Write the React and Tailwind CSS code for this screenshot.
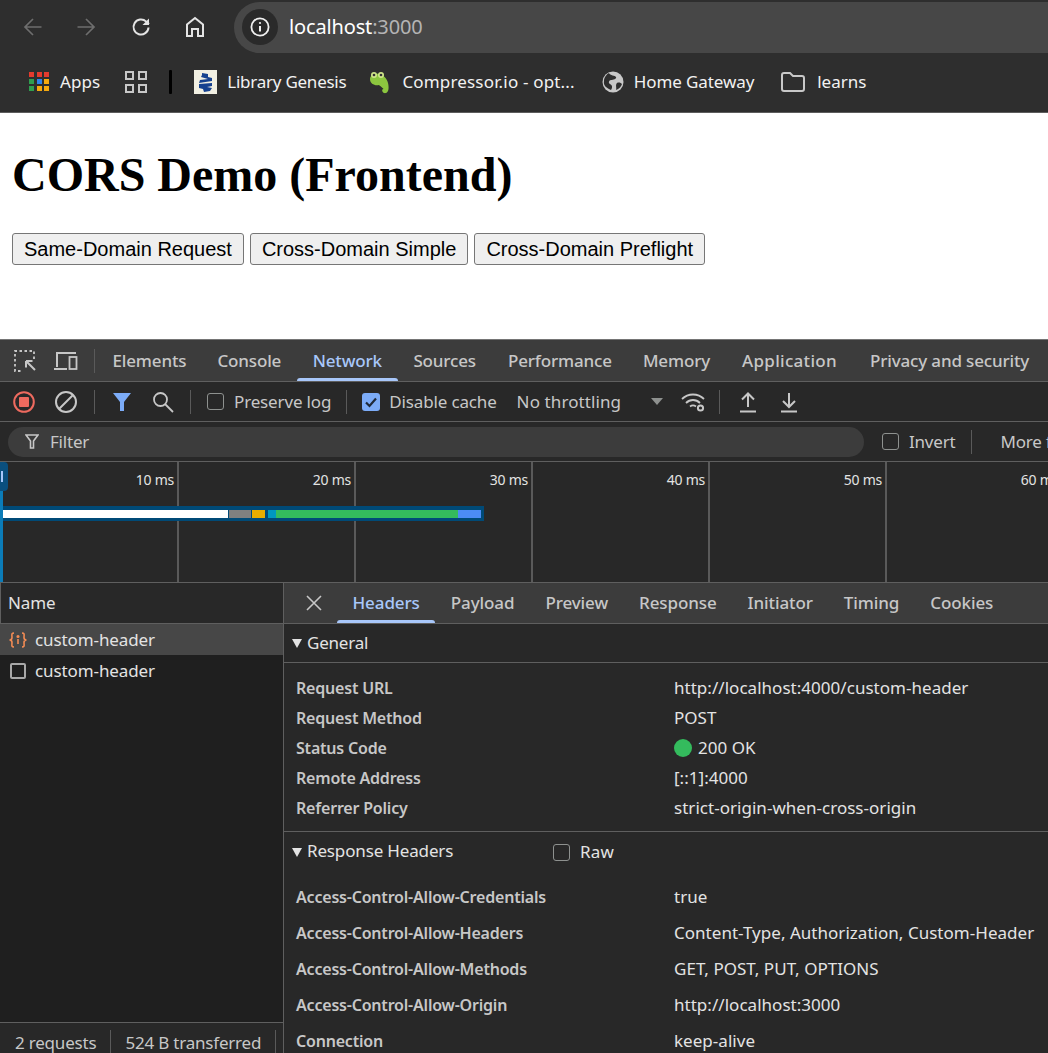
import React from "react";

const UI = { fontFamily: '"Noto Sans", "Open Sans", sans-serif' };

function Back({ flip }) {
  return (
    <svg width="20" height="20" viewBox="0 0 20 20" fill="none" stroke="#6e6e6e" strokeWidth="1.7" style={flip ? { transform: "scaleX(-1)" } : undefined}>
      <path d="M18.5 10H2M10 2l-8 8 8 8" />
    </svg>
  );
}
function Bookmark({ icon, label, cls, textCls }) {
  return (
    <div className={"flex items-center gap-[10px] " + (cls || "")}>
      {icon}
      <span className={textCls || ""}>{label}</span>
    </div>
  );
}
function AppsIcon() {
  const c = ["#e33b2e", "#e33b2e", "#e33b2e", "#2f9e4f", "#2c83ee", "#f5a90f", "#2f9e4f", "#f5a90f", "#f5a90f"];
  return (
    <div className="grid grid-cols-3 gap-[2px] w-[21px]">
      {c.map((x, i) => <div key={i} className="w-[5px] h-[5px]" style={{ background: x }} />)}
    </div>
  );
}
function Sep({ h = "h-[24px]", cls = "" }) {
  return <div className={"w-[1px] bg-[#5a5a5a] shrink-0 " + h + " " + cls} />;
}
function Tab({ children, active, cls = "" }) {
  return (
    <div className={"h-full flex items-center relative shrink-0 px-[15.5px] " + cls + (active ? " text-[#a8c7fa]" : " text-[#c7c7c7]")}>
      {children}
      {active && <div className="absolute left-0 right-0 bottom-0 h-[3px] rounded-t-[3px] bg-[#a8c7fa]" />}
    </div>
  );
}
function Row({ k, children, h = "h-[30px]" }) {
  return (
    <div className={"flex items-center " + h}>
      <div className="w-[390px] shrink-0 font-semibold text-[#c7c7c7] text-[16px] pl-[12px] tracking-[-0.2px] whitespace-nowrap">{k}</div>
      <div className="text-[#e3e3e3] text-[17px] whitespace-nowrap tracking-[0.03px]">{children}</div>
    </div>
  );
}
function Check({ cls = "" }) {
  return <div className={"w-[17px] h-[17px] rounded-[3px] border-[1.5px] border-[#8e918f] shrink-0 " + cls} />;
}

export default function App() {
  return (
    <div style={UI} className="w-[1048px] h-[1053px] overflow-hidden bg-white flex flex-col text-[18px]">
      {/* Chrome */}
      <div className="bg-[#2e2e2e] text-white shrink-0">
        <div className="h-[53px] flex items-center pt-[1px]">
          <div className="w-[234px] flex items-center shrink-0 pl-[23px]">
            <Back />
            <div className="w-[33px]" />
            <Back flip />
            <div className="w-[35px]" />
            <svg width="20" height="20" viewBox="0 0 20 20" fill="none" stroke="#e4e4e4" strokeWidth="2">
              <path d="M17.500 10.500a7.500 7.500 0 1 1-2.300-5.900L18 7" />
              <path d="M18 1.500V8h-6.500" fill="#e4e4e4" stroke="none" />
            </svg>
            <div className="w-[34px]" />
            <svg width="20" height="22" viewBox="0 0 20 22" fill="none" stroke="#e4e4e4" strokeWidth="2">
              <path d="M2 20V8.500L10 2l8 6.500V20h-5v-7H7v7z" />
            </svg>
          </div>
          <div className="flex-1 h-[51px] bg-[#474747] rounded-l-[26px] flex items-center pl-[8px]">
            <div className="w-[36px] h-[36px] rounded-full bg-[#2a2a2a] flex items-center justify-center">
              <svg width="20" height="20" viewBox="0 0 20 20" fill="none" stroke="#f0f0f0" strokeWidth="1.800">
                <circle cx="10" cy="10" r="8.600" />
                <path d="M10 9v5.500" strokeWidth="2" />
                <circle cx="10" cy="6" r="1.100" fill="#f0f0f0" stroke="none" />
              </svg>
            </div>
            <div className="ml-[11px] text-[20px] tracking-[-0.15px]">localhost<span className="text-[#b4b4b4]">:3000</span></div>
          </div>
        </div>
        <div className="h-[59px] flex items-center pl-[29px] pb-[2px] text-[#f2f2f2] text-[17px] tracking-[-0.15px] whitespace-nowrap">
          <Bookmark icon={<AppsIcon />} label="Apps" textCls="tracking-[0.1px]" />
          <div className="grid grid-cols-2 gap-[4px] ml-[25px] shrink-0">
            {[0, 1, 2, 3].map((i) => <div key={i} className="w-[9px] h-[9px] border-[2px] border-[#c8c8c8]" />)}
          </div>
          <div className="w-[3px] h-[24px] bg-black ml-[22px] mr-[22px] rounded-[1px]" />
          <Bookmark
            label="Library Genesis"
            textCls="tracking-[-0.25px]"
            icon={
              <svg width="23" height="24" viewBox="0 0 23 24">
                <rect width="23" height="24" fill="#f1efe2" />
                <path d="M8 3l6 1v3l4 1v3l-13 2 1-3 8-1-7-2 1-2zM5 14l13-1 0 3-5 1 5 1-2 3-6 1-1-3-4-1z" fill="#16418f" />
              </svg>
            }
          />
          <Bookmark
            cls="ml-[23px]"
            label="Compressor.io - opt..."
            textCls="tracking-[0.17px]"
            icon={
              <svg width="23" height="24" viewBox="0 0 23 24">
                <path d="M1 9c0-4 5-6 9-5 4 1 8 4 9 9 1 4 1 9-2 10-3 1-5-3-3-4 1 0 2 1 1 2 0-3-3-4-5-6-4 1-9-1-9-6z" fill="#8cc63f" />
                <circle cx="5" cy="5" r="3" fill="#cfe58a" />
                <circle cx="12" cy="5" r="3" fill="#cfe58a" />
                <circle cx="5" cy="5" r="1.300" fill="#333" />
                <circle cx="12" cy="5" r="1.300" fill="#333" />
              </svg>
            }
          />
          <Bookmark
            cls="ml-[27px]"
            label="Home Gateway"
            textCls="tracking-[-0.1px]"
            icon={
              <svg width="22" height="22" viewBox="0 0 22 22">
                <circle cx="11" cy="11" r="10.500" fill="#c8c8c8" />
                <path d="M7 2c1 3 6 2 7 4s-3 3-5 3-3 3-1 4 3 3 1 6c-4-2-8-4-7-9 0-4 3-7 5-8zM15 12c2-1 4 0 5 1-1 3-3 5-6 6 1-2-1-5 1-7z" fill="#2e2e2e" />
              </svg>
            }
          />
          <Bookmark
            cls="ml-[27px]"
            label="learns"
            textCls="tracking-[0px] ml-[2px]"
            icon={
              <svg width="24" height="20" viewBox="0 0 24 20" fill="none" stroke="#c8c8c8" strokeWidth="2">
                <path d="M1 3a2 2 0 0 1 2-2h6l3 3h9a2 2 0 0 1 2 2v11a2 2 0 0 1-2 2H3a2 2 0 0 1-2-2z" />
              </svg>
            }
          />
        </div>
        <div className="h-[1px] bg-[#5d5d5d]" />
      </div>

      {/* Page */}
      <div className="h-[226px] shrink-0 bg-white px-[12px] pt-[34px]" style={{ fontFamily: '"Liberation Serif", serif' }}>
        <h1 className="text-[48px] font-bold leading-[55px] text-black">CORS Demo (Frontend)</h1>
        <div className="flex gap-[6px] mt-[31px]" style={{ fontFamily: '"Liberation Sans", sans-serif' }}>
          {["Same-Domain Request", "Cross-Domain Simple", "Cross-Domain Preflight"].map((t) => (
            <button key={t} className="h-[32px] px-[11px] text-[20px] leading-none text-black bg-[#efefef] border border-[#767676] rounded-[3px]">{t}</button>
          ))}
        </div>
      </div>

      {/* DevTools */}
      <div className="flex-1 min-h-0 flex flex-col bg-[#282828] border-t border-[#757575]">
        {/* tabs */}
        <div className="h-[42px] shrink-0 bg-[#3c3c3c] border-b border-[#5f5f5f] flex items-center text-[17px] font-medium tracking-[-0.15px] whitespace-nowrap overflow-hidden">
          <div className="flex items-center gap-[18px] pl-[14px] shrink-0">
            <svg width="22" height="22" viewBox="0 0 22 22" fill="none" stroke="#c7c7c7" strokeWidth="1.800">
              <path d="M20 9V1H1v20h8" strokeDasharray="2.500 2.500" />
              <path d="M12 11l9 9M12 11h6.500M12 11v6.500" strokeWidth="2" />
            </svg>
            <svg width="24" height="20" viewBox="0 0 24 20" fill="none" stroke="#c7c7c7" strokeWidth="1.800">
              <path d="M3 16V2h19M0 18h13" strokeWidth="2" />
              <rect x="15.500" y="6" width="7" height="12" />
            </svg>
            <Sep h="h-[24px]" cls="-ml-[2px]" />
          </div>
          <div className="flex items-center h-full pl-[2px] pt-[1px]">
            <Tab>Elements</Tab>
            <Tab>Console</Tab>
            <Tab active cls="!px-[16px]">Network</Tab>
            <Tab>Sources</Tab>
            <Tab cls="!pl-[16.500px]">Performance</Tab>
            <Tab cls="!pr-[16px]">Memory</Tab>
            <Tab cls="!px-[16px] tracking-[0.3px]">Application</Tab>
            <Tab cls="!pl-[17px]">Privacy and security</Tab>
          </div>
        </div>
        {/* toolbar */}
        <div className="h-[40px] shrink-0 border-b border-[#5f5f5f] flex items-center text-[17px] text-[#c7c7c7] tracking-[-0.15px] whitespace-nowrap">
          <svg className="ml-[13px]" width="22" height="22" viewBox="0 0 22 22">
            <circle cx="11" cy="11" r="9.800" fill="none" stroke="#ee6a5f" strokeWidth="2" />
            <rect x="6" y="6" width="10" height="10" rx="1" fill="#ee6a5f" />
          </svg>
          <svg className="ml-[19px]" width="24" height="24" viewBox="0 0 24 24" fill="none" stroke="#c7c7c7" strokeWidth="2">
            <circle cx="12" cy="12" r="10" />
            <path d="M5 19L19 5" />
          </svg>
          <Sep cls="ml-[16px]" />
          <svg className="ml-[17px]" width="20" height="20" viewBox="0 0 20 20" fill="#7cacf8">
            <path d="M1 1h18l-7 9v9H8v-9z" />
          </svg>
          <svg className="ml-[20px]" width="22" height="22" viewBox="0 0 22 22" fill="none" stroke="#c7c7c7" strokeWidth="1.800">
            <circle cx="8.500" cy="8.500" r="6.500" />
            <path d="M13 13l8 8" />
          </svg>
          <Sep cls="ml-[16px]" />
          <Check cls="ml-[16px]" />
          <span className="ml-[10px]">Preserve log</span>
          <Sep cls="ml-[15px]" />
          <div className="ml-[15px] w-[18px] h-[18px] rounded-[3px] bg-[#7cacf8] flex items-center justify-center shrink-0">
            <svg width="14" height="14" viewBox="0 0 14 14" fill="none" stroke="#1f2a3a" strokeWidth="2.200"><path d="M2 7.500l3.500 3.500L12 3.500" /></svg>
          </div>
          <span className="ml-[9px]">Disable cache</span>
          <span className="ml-[20px] tracking-[0.1px]">No throttling</span>
          <div className="ml-[30px] w-0 h-0 border-l-[6px] border-r-[6px] border-t-[7px] border-l-transparent border-r-transparent border-t-[#8e918f]" />
          <svg className="ml-[18px]" width="26" height="22" viewBox="0 0 26 22" fill="none" stroke="#c7c7c7" strokeWidth="1.800">
            <path d="M1 8c6-6 16-6 22 0M5 12c4-4 10-4 14 0M9 15.500c2-1.500 4-1.500 6 0" />
            <circle cx="19.500" cy="17" r="2.600" strokeWidth="2" />
          </svg>
          <Sep cls="ml-[12px]" />
          <svg className="ml-[19px]" width="18" height="22" viewBox="0 0 18 22" fill="none" stroke="#c7c7c7" strokeWidth="2"><path d="M9 16V3M3 8.500L9 2.500l6 6M1 20.500h16" /></svg>
          <svg className="ml-[23px]" width="18" height="22" viewBox="0 0 18 22" fill="none" stroke="#c7c7c7" strokeWidth="2"><path d="M9 2v13M3 10l6 6 6-6M1 20.500h16" /></svg>
        </div>
        {/* filter */}
        <div className="h-[40px] shrink-0 border-b border-[#5f5f5f] flex items-center text-[17px] text-[#c7c7c7] tracking-[-0.2px] whitespace-nowrap overflow-hidden">
          <div className="w-[856px] h-[30px] ml-[8px] shrink-0 rounded-full bg-[#3c3c3c] flex items-center pl-[17px] gap-[11px] text-[#c7c7c7]">
            <svg width="14" height="15" viewBox="0 0 14 15" fill="none" stroke="#c7c7c7" strokeWidth="1.600"><path d="M1 1h12L8.500 7v7h-3V7z" /></svg>
            <span className="pt-[1px]">Filter</span>
          </div>
          <Check cls="ml-[18px]" />
          <span className="ml-[10px] pt-[1px]">Invert</span>
          <Sep cls="ml-[16px]" />
          <span className="ml-[28px] pt-[1px]">More filters</span>
        </div>
        {/* overview */}
        <div className="h-[121px] shrink-0 border-b border-[#5f5f5f] relative flex pl-[2px] text-[14px] text-[#e3e3e3] overflow-hidden">
          {["10 ms", "20 ms", "30 ms", "40 ms", "50 ms", "60 ms"].map((t) => (
            <div key={t} className="w-[177px] shrink-0 border-r-[2px] border-[#5a5a5a] text-right pr-[3px] pt-[7px] tracking-[-0.25px]">{t}</div>
          ))}
          <div className="absolute left-0 top-0 bottom-0 w-[3px] bg-[#0b7cb8]" />
          <div className="absolute left-0 top-0 w-[8px] h-[29px] bg-[#0a4f7e] rounded-r-[4px] flex items-center pl-[1px]">
            <div className="w-[2px] h-[11px] bg-[#a8c7fa]" />
          </div>
          <div className="absolute left-[3px] top-[44px] w-[481px] h-[15px] bg-[#004a77] flex items-center pr-[3px]">
            <div className="h-[8px] flex w-full">
              <div className="w-[226px] bg-white" />
              <div className="w-[22px] ml-[1px] bg-[#808080]" />
              <div className="w-[13px] ml-[1px] bg-[#e8ad00]" />
              <div className="w-[8px] ml-[3px] bg-[#0097c0]" />
              <div className="w-[183px] bg-[#34bb5d]" />
              <div className="w-[23px] bg-[#4c8cf5]" />
            </div>
          </div>
        </div>
        {/* bottom */}
        <div className="flex-1 min-h-0 flex">
          <div className="w-[284px] shrink-0 border-r border-[#5f5f5f] flex flex-col bg-[#1f1f1f] text-[17px] tracking-[-0.1px] text-[#e3e3e3]">
            <div className="h-[41px] shrink-0 bg-[#282828] border-b border-[#5f5f5f] border-l border-l-[#5f5f5f] flex items-center pl-[7px]">Name</div>
            <div className="h-[31px] shrink-0 bg-[#474747] flex items-center pl-[8px] gap-[7px]">
              <svg width="20" height="16" viewBox="0 0 20 16" fill="none" stroke="#f28b54" strokeWidth="1.600">
                <path d="M6 1C3 1 4 3 4 5.500 4 7 3 8 1.500 8 3 8 4 9 4 10.500 4 13 3 15 6 15M14 1c3 0 2 2 2 4.500C16 7 17 8 18.500 8 17 8 16 9 16 10.500 16 13 17 15 14 15" />
                <path d="M10 7v5" />
                <circle cx="10" cy="4.500" r="0.800" fill="#f28b54" />
              </svg>
              custom-header
            </div>
            <div className="h-[31px] shrink-0 flex items-center pl-[10px] gap-[9px]">
              <div className="w-[16px] h-[16px] rounded-[2px] border-[2px] border-[#a8a8a8]" />
              custom-header
            </div>
            <div className="flex-1" />
            <div className="h-[31px] shrink-0 bg-[#282828] border-t border-[#5f5f5f] flex items-start pl-[15px] pt-[7px] text-[#c7c7c7] whitespace-nowrap overflow-hidden tracking-[-0.2px]">
              2 requests
              <Sep h="h-[24px]" cls="ml-[14px]" />
              <span className="ml-[14px]">524 B transferred</span>
              <Sep h="h-[24px]" cls="ml-[14px]" />
            </div>
          </div>
          <div className="flex-1 min-w-0 flex flex-col overflow-hidden">
            <div className="h-[41px] shrink-0 bg-[#3c3c3c] border-b border-[#5f5f5f] flex items-center text-[17px] font-medium tracking-[-0.1px] whitespace-nowrap">
              <svg className="ml-[22px] mr-[15px] shrink-0" width="16" height="16" viewBox="0 0 16 16" fill="none" stroke="#c7c7c7" strokeWidth="1.600"><path d="M1 1l14 14M15 1L1 15" /></svg>
              <Tab active>Headers</Tab>
              <Tab>Payload</Tab>
              <Tab>Preview</Tab>
              <Tab>Response</Tab>
              <Tab>Initiator</Tab>
              <Tab>Timing</Tab>
              <Tab>Cookies</Tab>
            </div>
            <div className="h-[39px] shrink-0 border-b border-[#5f5f5f] flex items-center pl-[8px] gap-[5px] text-[17px] text-[#e3e3e3] tracking-[-0.2px]">
              <div className="w-0 h-0 border-l-[5px] border-r-[5px] border-t-[9px] border-l-transparent border-r-transparent border-t-[#e3e3e3]" />
              General
            </div>
            <div className="h-[169px] shrink-0 border-b border-[#5f5f5f] pt-[10px]">
              <Row k="Request URL">http://localhost:4000/custom-header</Row>
              <Row k="Request Method">POST</Row>
              <Row k="Status Code">
                <span className="flex items-center gap-[6px]"><span className="w-[18px] h-[18px] rounded-full bg-[#34bb5d] inline-block" />200 OK</span>
              </Row>
              <Row k="Remote Address">[::1]:4000</Row>
              <Row k="Referrer Policy">strict-origin-when-cross-origin</Row>
            </div>
            <div className="h-[40px] shrink-0 flex items-center pl-[8px] gap-[5px] text-[17px] text-[#e3e3e3] tracking-[-0.15px]">
              <div className="w-0 h-0 border-l-[5px] border-r-[5px] border-t-[9px] border-l-transparent border-r-transparent border-t-[#e3e3e3]" />
              <span className="w-[241px] -mt-[2px]">Response Headers</span>
              <Check />
              <span className="ml-[5px] tracking-[0.2px]">Raw</span>
            </div>
            <div className="pt-[7px]">
              <Row h="h-[36px]" k="Access-Control-Allow-Credentials">true</Row>
              <Row h="h-[36px]" k="Access-Control-Allow-Headers">Content-Type, Authorization, Custom-Header</Row>
              <Row h="h-[36px]" k="Access-Control-Allow-Methods">GET, POST, PUT, OPTIONS</Row>
              <Row h="h-[36px]" k="Access-Control-Allow-Origin">http://localhost:3000</Row>
              <Row h="h-[36px]" k="Connection">keep-alive</Row>
            </div>
          </div>
        </div>
      </div>
    </div>
  );
}
